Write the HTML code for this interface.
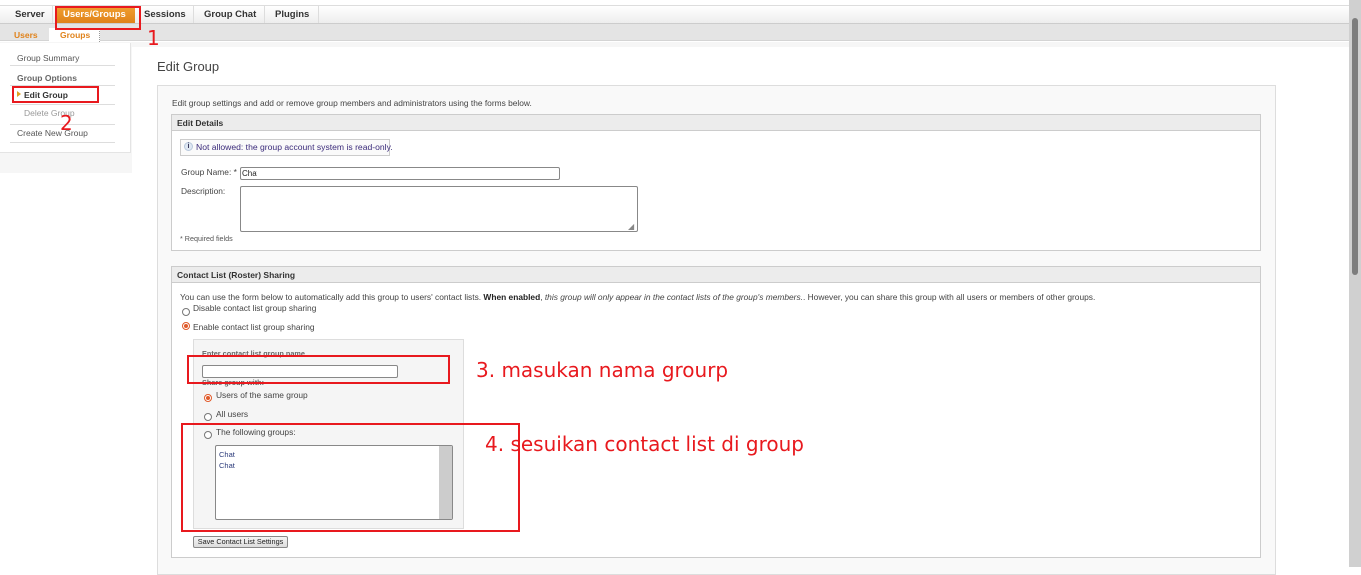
<!DOCTYPE html>
<html><head><meta charset="utf-8"><style>
*{margin:0;padding:0;box-sizing:border-box}
body{width:1361px;height:567px;overflow:hidden;background:#fff;font-family:"Liberation Sans",Arial,sans-serif;position:relative;color:#333}
.a{position:absolute;white-space:nowrap}
.t{font-size:8.4px;color:#444}
.red{position:absolute;border:2px solid #e8191e}
.ann{position:absolute;font-family:"DejaVu Sans",sans-serif;color:#e8191e;font-size:20px;white-space:nowrap}
.radio{position:absolute;width:8px;height:8px;border:1px solid #777;border-radius:50%;background:#fff}
.radio.on{border-color:#e05a2a}
.radio.on:after{content:"";position:absolute;left:1px;top:1px;width:4px;height:4px;border-radius:50%;background:#e05a2a}
.hdr{position:absolute;background:#ececec;border-bottom:1px solid #ccc;font-size:8.5px;font-weight:bold;color:#333;padding:4px 5px}
.sep{position:absolute;left:10px;width:105px;height:1px;background:#ddd}
.side{position:absolute;left:17px;font-size:8.5px;color:#555}
</style></head><body>
<div class="a" style="left:0;top:5px;width:1349px;height:19px;background:linear-gradient(#fff,#ededed);border-top:1px solid #ddd;border-bottom:1px solid #ccc"></div>
<div class="a" style="left:5px;top:6px;width:48px;height:17px;border-right:1px solid #ddd;font-size:9.5px;font-weight:bold;padding:3px 0 0 10px">Server</div>
<div class="a" style="left:55px;top:6px;width:80px;height:17px;background:linear-gradient(#f0a030,#e0821a);color:#fff;font-size:9.5px;font-weight:bold;padding:3px 0 0 8px">Users/Groups</div>
<div class="a" style="left:137px;top:6px;width:57px;height:17px;border-right:1px solid #ddd;font-size:9.5px;font-weight:bold;padding:3px 0 0 7px">Sessions</div>
<div class="a" style="left:194px;top:6px;width:71px;height:17px;border-right:1px solid #ddd;font-size:9.5px;font-weight:bold;padding:3px 0 0 10px">Group Chat</div>
<div class="a" style="left:265px;top:6px;width:54px;height:17px;border-right:1px solid #ddd;font-size:9.5px;font-weight:bold;padding:3px 0 0 10px">Plugins</div>
<div class="a" style="left:0;top:24px;width:1349px;height:17px;background:#e4e4e4;border-bottom:1px solid #d4d4d4"></div>
<div class="a" style="left:14px;top:30px;font-size:8.5px;font-weight:bold;color:#e0821a">Users</div>
<div class="a" style="left:49px;top:28px;width:51px;height:14px;background:#fff;border-right:1px dotted #999;font-size:8.5px;font-weight:bold;color:#e0821a;padding:2px 0 0 11px">Groups</div>
<div class="a" style="left:0;top:42px;width:1349px;height:5px;background:#f6f6f6"></div>
<div class="a" style="left:0;top:42px;width:135px;height:131px;background:#f6f6f6"></div>
<div class="a" style="left:0;top:43px;width:131px;height:110px;background:#fff;border-right:1px solid #e4e4e4;border-bottom:1px solid #e4e4e4"></div>
<div class="a" style="left:132px;top:47px;width:1217px;height:520px;background:#fff"></div>
<div class="side a" style="top:53px">Group Summary</div>
<div class="sep" style="top:65px"></div>
<div class="side a" style="top:73px;font-weight:bold;color:#666">Group Options</div>
<div class="sep" style="top:85px"></div>
<div class="a" style="left:17px;top:91px;width:0;height:0;border-left:4px solid #e0a020;border-top:3px solid transparent;border-bottom:3px solid transparent"></div>
<div class="side a" style="left:24px;top:90px;font-weight:bold;color:#333">Edit Group</div>
<div class="sep" style="top:104px"></div>
<div class="side a" style="left:24px;top:108px;color:#999">Delete Group</div>
<div class="sep" style="top:124px"></div>
<div class="side a" style="top:128px">Create New Group</div>
<div class="sep" style="top:142px"></div>
<div class="a" style="left:157px;top:59px;font-size:13px;color:#444">Edit Group</div>
<div class="a" style="left:157px;top:85px;width:1119px;height:490px;border:1px solid #ddd;background:#f9f9f9"></div>
<div class="a t" style="left:172px;top:98px">Edit group settings and add or remove group members and administrators using the forms below.</div>
<div class="a" style="left:171px;top:114px;width:1090px;height:137px;border:1px solid #ccc;background:#fff"></div>
<div class="hdr" style="left:172px;top:115px;width:1088px;height:16px;padding-top:3px">Edit Details</div>
<div class="a" style="left:180px;top:139px;width:210px;height:17px;border:1px solid #ccc;background:#fafafa"></div>
<div class="a" style="left:184px;top:142px;width:9px;height:9px;border-radius:50%;background:#dfe8f3;border:1px solid #b8c8dc;font-size:7px;color:#335;text-align:center;line-height:8px;font-weight:bold">i</div>
<div class="a" style="left:196px;top:142px;font-size:8.6px;color:#3a2a7a">Not allowed: the group account system is read-only.</div>
<div class="a t" style="left:181px;top:167px">Group Name: *</div>
<div class="a" style="left:240px;top:167px;width:320px;height:13px;border:1px solid #888;border-radius:2px;background:#fff"></div>
<div class="a" style="left:242px;top:169px;font-size:8px;color:#222">Chat</div>
<div class="a" style="left:257px;top:168px;width:73px;height:11px;background:#fff"></div>
<div class="a t" style="left:181px;top:186px">Description:</div>
<div class="a" style="left:240px;top:186px;width:398px;height:46px;border:1px solid #888;border-radius:2px;background:#fff"></div>
<div class="a" style="left:628px;top:222px;font-size:8px;color:#888">◢</div>
<div class="a" style="left:180px;top:234px;font-size:7.2px;color:#555">* Required fields</div>
<div class="a" style="left:171px;top:266px;width:1090px;height:292px;border:1px solid #ccc;background:#fff"></div>
<div class="hdr" style="left:172px;top:267px;width:1088px;height:16px;padding-top:3px">Contact List (Roster) Sharing</div>
<div class="a t" style="left:180px;top:292px">You can use the form below to automatically add this group to users' contact lists. <b style="color:#222">When enabled</b>, <i>this group will only appear in the contact lists of the group's members.</i>. However, you can share this group with all users or members of other groups.</div>
<div class="radio" style="left:182px;top:308px"></div>
<div class="a t" style="left:193px;top:303px">Disable contact list group sharing</div>
<div class="radio on" style="left:182px;top:322px"></div>
<div class="a t" style="left:193px;top:322px">Enable contact list group sharing</div>
<div class="a" style="left:193px;top:339px;width:271px;height:190px;border:1px solid #ddd;background:#f5f5f5"></div>
<div class="a" style="left:202px;top:349px;font-size:7.3px;font-weight:bold;color:#666">Enter contact list group name</div>
<div class="a" style="left:202px;top:365px;width:196px;height:13px;border:1px solid #888;border-radius:2px;background:#fff"></div>
<div class="a" style="left:202px;top:378px;font-size:7.3px;font-weight:bold;color:#666">Share group with:</div>
<div class="radio on" style="left:204px;top:394px"></div>
<div class="a t" style="left:216px;top:390px">Users of the same group</div>
<div class="radio" style="left:204px;top:413px"></div>
<div class="a t" style="left:216px;top:409px">All users</div>
<div class="radio" style="left:204px;top:431px"></div>
<div class="a t" style="left:216px;top:427px">The following groups:</div>
<div class="a" style="left:215px;top:445px;width:238px;height:75px;border:1px solid #888;border-radius:2px;background:#fff"></div>
<div class="a" style="left:439px;top:446px;width:13px;height:73px;background:#ccc"></div>
<div class="a" style="left:219px;top:449px;font-size:7.5px;color:#2a3a7a;line-height:11px">Chat<br>Chat</div>
<div class="a" style="left:193px;top:536px;width:95px;height:12px;border:1px solid #888;border-radius:2px;background:linear-gradient(#f4f4f4,#ddd);font-size:7.3px;color:#222;text-align:center;line-height:10px">Save Contact List Settings</div>
<div class="a" style="left:1349px;top:0;width:12px;height:567px;background:#d0d0d0"></div>
<div class="a" style="left:1352px;top:18px;width:6px;height:257px;border-radius:3px;background:#7d7d7d"></div>
<div class="red" style="left:55px;top:6px;width:86px;height:24px"></div>
<div class="ann" style="left:147px;top:26px">1</div>
<div class="red" style="left:12px;top:86px;width:87px;height:17px"></div>
<div class="ann" style="left:60px;top:111px">2</div>
<div class="red" style="left:187px;top:355px;width:263px;height:29px"></div>
<div class="ann" style="left:476px;top:358px">3. masukan nama grourp</div>
<div class="red" style="left:181px;top:423px;width:339px;height:109px"></div>
<div class="ann" style="left:485px;top:432px">4. sesuikan contact list di group</div>
</body></html>
